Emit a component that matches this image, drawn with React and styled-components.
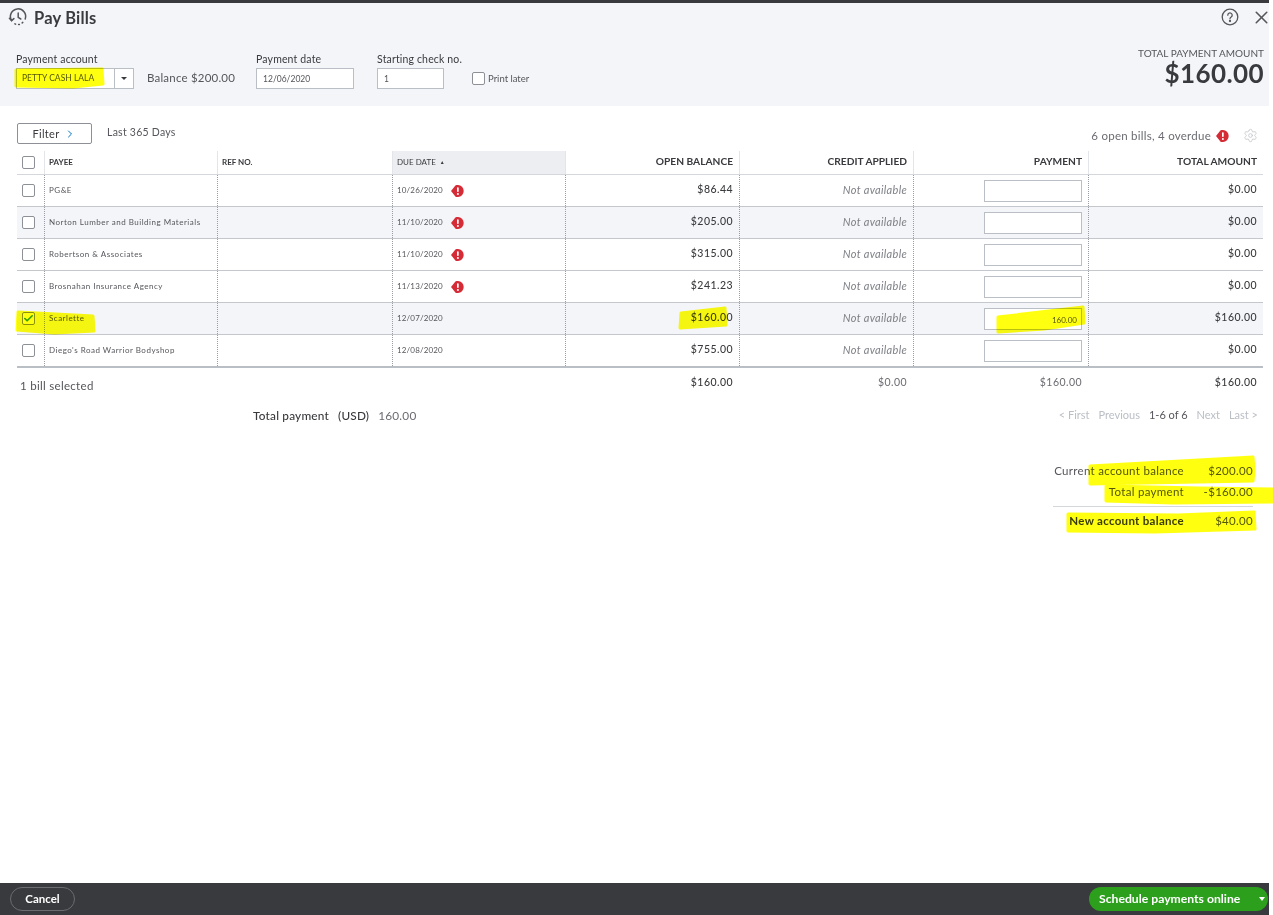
import React from "react";
import styled, { createGlobalStyle } from "styled-components";
import { Settings, X, ChevronRight, Check } from "lucide-react";

const bills = [
  { payee: "PG&E", due: "10/26/2020", late: true, open: "$86.44", total: "$0.00" },
  { payee: "Norton Lumber and Building Materials", due: "11/10/2020", late: true, open: "$205.00", total: "$0.00", shade: true },
  { payee: "Robertson & Associates", due: "11/10/2020", late: true, open: "$315.00", total: "$0.00" },
  { payee: "Brosnahan Insurance Agency", due: "11/13/2020", late: true, open: "$241.23", total: "$0.00" },
  { payee: "Scarlette", due: "12/07/2020", open: "$160.00", total: "$160.00", paid: "160.00", shade: true },
  { payee: "Diego's Road Warrior Bodyshop", due: "12/08/2020", open: "$755.00", total: "$0.00" },
];

const ErrorBadge = () => (
  <svg width="13" height="12" viewBox="0 0 13 12">
    <path d="M0 6L4.4.6C4.7.2 5.1 0 5.6 0H7a5.7 6 0 0 1 0 12H5.6c-.5 0-.9-.2-1.2-.6z" fill="#d52b36" />
    <rect x="6" y="2.2" width="1.7" height="4.8" rx=".8" fill="#fff" />
    <circle cx="6.85" cy="9" r="1" fill="#fff" />
  </svg>
);

const ClockRefresh = () => (
  <svg width="20" height="20" viewBox="0 0 20 20" fill="none" stroke="#55565b" strokeWidth="1.5" strokeLinecap="round">
    <path d="M3.6 13.5A7.6 7.6 0 1 1 17.2 12" />
    <path d="M1.4 11.2l2.2 2.4 2.3-2" />
    <path d="M10.2 6v4.4l2.6 1.6" />
    <path d="M14.8 15.4l-.6.5M11.4 17.4h-.8M7.6 17.2l-.7-.4" />
  </svg>
);

const HelpIcon = () => (
  <svg width="18" height="18" viewBox="0 0 18 18" fill="none" stroke="#55565b" strokeWidth="1.3">
    <circle cx="9" cy="9" r="7.8" />
    <path d="M6.8 7.2a2.2 2.2 0 1 1 3.4 1.8c-.8.5-1.2 1-1.2 1.8" strokeLinecap="round" />
    <circle cx="9" cy="13" r=".5" fill="#55565b" />
  </svg>
);

// marker strokes someone drew over the screenshot
const Markers = () => (
  <MarkerLayer width="1273" height="915" viewBox="0 0 1273 915">
    <path d="M16 70l86-1 1 15-30 3-57-1z" />
    <path d="M18 312l75 4 1 15-40 2-37-3z" />
    <path d="M681 313l44-5 1 17-46 3z" />
    <path d="M998 317l85-10 1 16-40 6-46 3z" />
    <path d="M1090 466l163-9 1 13-1 11-163 3z" />
    <path d="M1106 486l93 2 74 1v13l-100 1-67-2z" />
    <path d="M1068 514l110 1 76-3 1 17-100 3-87-1z" />
  </MarkerLayer>
);

export default function App() {
  return (
    <>
      <GlobalStyle />
      <Page>
        <Header>
          <TitleRow>
            <ClockRefresh />
            <Title>Pay Bills</Title>
            <HeaderIcons>
              <HelpIcon />
              <X size={21} color="#55565b" strokeWidth={1.8} />
            </HeaderIcons>
          </TitleRow>
          <FormRow>
            <Field>
              <FieldLabel>Payment account</FieldLabel>
              <Combo>
                <ComboText>PETTY CASH LALA</ComboText>
                <ComboCaret />
              </Combo>
            </Field>
            <BalanceText>Balance $200.00</BalanceText>
            <Field>
              <FieldLabel>Payment date</FieldLabel>
              <TextBox $width={98}>12/06/2020</TextBox>
            </Field>
            <Field>
              <FieldLabel>Starting check no.</FieldLabel>
              <TextBox $width={67}>1</TextBox>
            </Field>
            <PrintLater>
              <PrintBox />
              Print later
            </PrintLater>
            <TotalBlock>
              <TotalLabel>TOTAL PAYMENT AMOUNT</TotalLabel>
              <TotalAmount>$160.00</TotalAmount>
            </TotalBlock>
          </FormRow>
        </Header>

        <Content>
          <FilterRow>
            <FilterButton>
              Filter <ChevronRight size={12} color="#0077c5" />
            </FilterButton>
            <FilterText>Last 365 Days</FilterText>
            <OpenBills>
              6 open bills, 4 overdue <ErrorBadge />
              <GearWrap>
                <Settings size={15} color="#c4c5c9" strokeWidth={1.3} />
              </GearWrap>
            </OpenBills>
          </FilterRow>

          <Table>
            <HeadRow>
              <HeadCell $box><CheckBox /></HeadCell>
              <HeadCell $small>PAYEE</HeadCell>
              <HeadCell $small>REF NO.</HeadCell>
              <HeadCell $small $sorted>DUE DATE <SortArrow>▲</SortArrow></HeadCell>
              <HeadCell $right>OPEN BALANCE</HeadCell>
              <HeadCell $right>CREDIT APPLIED</HeadCell>
              <HeadCell $right>PAYMENT</HeadCell>
              <HeadCell $right>TOTAL AMOUNT</HeadCell>
            </HeadRow>
            {bills.map((bill) => (
              <BodyRow key={bill.payee} $shade={bill.shade}>
                <BoxCell>
                  <CheckBox>
                    {bill.paid && <Check size={11} color="#2ca01c" strokeWidth={3.5} />}
                  </CheckBox>
                </BoxCell>
                <Cell $small>{bill.payee}</Cell>
                <Cell />
                <Cell $small $date>
                  {bill.due}
                  {bill.late && <BadgeGap><ErrorBadge /></BadgeGap>}
                </Cell>
                <Cell $right $strong>{bill.open}</Cell>
                <Cell $right $muted>Not available</Cell>
                <InputCell>
                  <PayInput>{bill.paid}</PayInput>
                </InputCell>
                <Cell $right $strong>{bill.total}</Cell>
              </BodyRow>
            ))}
            <FootRow>
              <SelectedText>1 bill selected</SelectedText>
              <FootCell $strong>$160.00</FootCell>
              <FootCell>$0.00</FootCell>
              <FootCell>$160.00</FootCell>
              <FootCell $strong>$160.00</FootCell>
            </FootRow>
          </Table>

          <SummaryRow>
            <TotalPayment>
              <b>Total payment</b>
              <b>(USD)</b>
              <span>160.00</span>
            </TotalPayment>
            <Pager>
              <span>&lt; First</span>
              <span>Previous</span>
              <PagerCurrent>1-6 of 6</PagerCurrent>
              <span>Next</span>
              <span>Last &gt;</span>
            </Pager>
          </SummaryRow>

          <Balances>
            <BalanceRow>
              <span>Current account balance</span>
              <BalanceValue>$200.00</BalanceValue>
            </BalanceRow>
            <BalanceRow>
              <span>Total payment</span>
              <BalanceValue>-$160.00</BalanceValue>
            </BalanceRow>
            <BalanceRow $total>
              <strong>New account balance</strong>
              <BalanceValue>$40.00</BalanceValue>
            </BalanceRow>
          </Balances>
        </Content>

        <Footer>
          <CancelButton>Cancel</CancelButton>
          <ScheduleButton>
            Schedule payments online
            <ScheduleCaret />
          </ScheduleButton>
        </Footer>
        <Markers />
      </Page>
    </>
  );
}

const GlobalStyle = createGlobalStyle`
  html, body {
    margin: 0;
    background: #fff;
  }
  body {
    font-family: "Lato", "Liberation Sans", sans-serif;
    color: #393a3d;
  }
`;

const Page = styled.div`
  position: relative;
  width: 1269px;
  height: 915px;
  display: flex;
  flex-direction: column;
  border-top: 3px solid #393a3d;
  box-sizing: border-box;
`;

const MarkerLayer = styled.svg`
  position: absolute;
  left: 0;
  top: -3px;
  pointer-events: none;
  mix-blend-mode: multiply;
  path {
    fill: #ffff10;
    stroke: #ffff10;
    stroke-width: 3;
    stroke-linejoin: round;
  }
`;

const Header = styled.div`
  height: 103px;
  background: #f4f5f8;
  padding: 4px 5px 0 8px;
  box-sizing: border-box;
`;

const TitleRow = styled.div`
  display: flex;
  align-items: center;
  height: 20px;
`;

const Title = styled.h1`
  margin: 2px 0 0 6px;
  font-size: 16.5px;
  font-weight: 700;
  letter-spacing: 0.2px;
`;

const HeaderIcons = styled.div`
  margin-left: auto;
  display: flex;
  align-items: center;
  gap: 12px;
  margin-right: -8px;
`;

const FormRow = styled.div`
  display: flex;
  align-items: flex-end;
  margin: 26px 0 0 8px;
  position: relative;
`;

const Field = styled.div`
  display: flex;
  flex-direction: column;
  gap: 3px;
  margin-right: 23px;
`;

const FieldLabel = styled.label`
  font-size: 10.5px;
  letter-spacing: 0.15px;
  color: #393a3d;
`;

const Combo = styled.div`
  width: 118px;
  height: 21px;
  display: flex;
  background: #fff;
  border: 1px solid #babec5;
  box-sizing: border-box;
`;

const ComboText = styled.div`
  flex: 1;
  padding-left: 5px;
  font-size: 8.5px;
  line-height: 19px;
  color: #55565b;
`;

const ComboCaret = styled.div`
  width: 18px;
  border-left: 1px solid #babec5;
  position: relative;
  &::after {
    content: "";
    position: absolute;
    left: 6px;
    top: 8px;
    border: 3px solid transparent;
    border-top: 3px solid #393a3d;
  }
`;

const BalanceText = styled.div`
  margin: 0 21px 3px -10px;
  font-size: 11.5px;
  line-height: 16px;
  letter-spacing: 0.2px;
  color: #55565b;
`;

const TextBox = styled.div`
  width: ${(p) => p.$width}px;
  height: 21px;
  padding-left: 6px;
  background: #fff;
  border: 1px solid #babec5;
  box-sizing: border-box;
  font-size: 8.5px;
  line-height: 20px;
  color: #55565b;
`;

const PrintLater = styled.div`
  display: flex;
  align-items: center;
  gap: 3px;
  margin: 0 0 4px -13px;
  font-size: 9.5px;
  color: #55565b;
`;

const PrintBox = styled.span`
  width: 13px;
  height: 13px;
  background: #fff;
  border: 1px solid #8d9096;
  border-radius: 2px;
  box-sizing: border-box;
`;

const TotalBlock = styled.div`
  position: absolute;
  right: 0;
  top: -6px;
  text-align: right;
`;

const TotalLabel = styled.div`
  font-size: 10px;
  color: #55565b;
`;

const TotalAmount = styled.div`
  font-size: 26px;
  font-weight: 700;
  line-height: 28px;
  letter-spacing: 0.4px;
`;

const Content = styled.div`
  flex: 1;
  padding: 0 6px 0 17px;
`;

const FilterRow = styled.div`
  height: 45px;
  display: flex;
  align-items: flex-start;
  padding-top: 17px;
  box-sizing: border-box;
`;

const FilterButton = styled.div`
  width: 75px;
  height: 21px;
  display: flex;
  align-items: center;
  justify-content: center;
  gap: 5px;
  border: 1px solid #8d9096;
  border-radius: 2px;
  box-sizing: border-box;
  font-size: 11px;
  letter-spacing: 0.3px;
`;

const FilterText = styled.div`
  margin-left: 15px;
  font-size: 10.5px;
  line-height: 18px;
  letter-spacing: 0.25px;
  color: #55565b;
`;

const OpenBills = styled.div`
  margin-left: auto;
  margin-top: 5px;
  display: flex;
  align-items: center;
  gap: 5px;
  padding-right: 5px;
  font-size: 11.5px;
  letter-spacing: 0.25px;
  color: #6b6c72;
`;

const GearWrap = styled.span`
  display: flex;
  margin-left: 9px;
`;

const columns = "27px 173px 175px 173px 174px 174px 175px 175px";

const Table = styled.div`
  display: flex;
  flex-direction: column;
`;

const HeadRow = styled.div`
  display: grid;
  grid-template-columns: ${columns};
  height: 24px;
  border-bottom: 1px solid #d4d7dc;
  box-sizing: border-box;
`;

const HeadCell = styled.div`
  display: flex;
  align-items: center;
  justify-content: ${(p) => (p.$right ? "flex-end" : "flex-start")};
  padding: 0 6px ${(p) => (p.$box ? "0" : p.$right ? "3px" : "2px")} ${(p) => (p.$box ? "5px" : "4px")};
  font-size: ${(p) => (p.$small ? "8px" : "10.2px")};
  font-weight: 700;
  color: #393a3d;
  background: ${(p) => (p.$sorted ? "#eceef1" : "transparent")};
  ${(p) => p.$sorted && "font-weight: 400;"}
  &:not(:first-child) {
    border-left: 1px solid #e3e5e8;
  }
`;

const SortArrow = styled.span`
  margin-left: 4px;
  font-size: 5px;
`;

const BodyRow = styled.div`
  display: grid;
  grid-template-columns: ${columns};
  height: 32px;
  background: ${(p) => (p.$shade ? "#f4f5f8" : "#fff")};
  border-bottom: 1px solid #c4c7cc;
  box-sizing: border-box;
  &:nth-child(7) {
    height: 33px;
    border-bottom: 2px solid #babec5;
  }
`;

const Cell = styled.div`
  display: flex;
  align-items: center;
  justify-content: ${(p) => (p.$right ? "flex-end" : "flex-start")};
  padding: 0 6px ${(p) => (p.$right ? "3px" : "2px")} ${(p) => (p.$small ? "4px" : "5px")};
  font-size: ${(p) => (p.$small ? "8px" : p.$muted ? "11px" : "10.5px")};
  font-style: ${(p) => (p.$muted ? "italic" : "normal")};
  font-weight: ${(p) => (p.$strong ? 500 : 400)};
  color: ${(p) => (p.$muted ? "#7e8086" : p.$small ? "#55565b" : "#393a3d")};
  letter-spacing: ${(p) => (p.$date ? "0.15px" : p.$small ? "0.5px" : p.$muted ? "0.3px" : "0.45px")};
  border-left: 1px dotted #9a9da3;
`;

const BoxCell = styled.div`
  display: flex;
  align-items: center;
  padding-left: 5px;
`;

const InputCell = styled.div`
  display: flex;
  align-items: center;
  justify-content: flex-end;
  padding-right: 6px;
  border-left: 1px dotted #9a9da3;
`;

const CheckBox = styled.div`
  width: 13px;
  height: 13px;
  display: flex;
  align-items: center;
  justify-content: center;
  background: #fff;
  border: 1px solid #8d9096;
  border-radius: 2px;
  box-sizing: border-box;
`;

const BadgeGap = styled.span`
  display: flex;
  margin-left: 8px;
  margin-top: 2px;
`;

const PayInput = styled.div`
  width: 98px;
  height: 22px;
  padding-right: 4px;
  background: #fff;
  border: 1px solid #babec5;
  box-sizing: border-box;
  font-size: 8px;
  line-height: 22px;
  text-align: right;
  color: #55565b;
`;

const FootRow = styled.div`
  display: grid;
  grid-template-columns: 548px 174px 174px 175px 175px;
  height: 31px;
  align-items: center;
`;

const SelectedText = styled.div`
  padding-left: 3px;
  font-size: 11.5px;
  letter-spacing: 0.3px;
  color: #55565b;
  padding-top: 3px;
`;

const FootCell = styled.div`
  padding: 0 6px 4px 0;
  text-align: right;
  font-size: 10.5px;
  letter-spacing: 0.45px;
  font-weight: ${(p) => (p.$strong ? 500 : 400)};
  color: ${(p) => (p.$strong ? "#393a3d" : "#6b6c72")};
`;

const SummaryRow = styled.div`
  display: flex;
  align-items: center;
  justify-content: space-between;
  height: 33px;
  padding: 0 5px 0 236px;
`;

const TotalPayment = styled.div`
  display: flex;
  gap: 9px;
  font-size: 11.8px;
  letter-spacing: 0.2px;
  color: #6b6c72;
  b {
    font-weight: 500;
    color: #393a3d;
  }
`;

const Pager = styled.div`
  display: flex;
  gap: 9px;
  margin-top: -3px;
  font-size: 11px;
  color: #babec5;
`;

const PagerCurrent = styled.span`
  color: #55565b;
`;

const Balances = styled.div`
  width: 200px;
  margin: 28px 0 0 auto;
  padding-right: 10px;
  box-sizing: content-box;
`;

const BalanceRow = styled.div`
  display: flex;
  justify-content: flex-end;
  align-items: center;
  height: ${(p) => (p.$total ? "27px" : "21px")};
  font-size: 11.5px;
  letter-spacing: 0.3px;
  color: #55565b;
  ${(p) => p.$total && "border-top: 1px solid #d4d7dc; margin-top: 4px; box-sizing: border-box;"}
  strong {
    font-weight: 700;
    color: #393a3d;
  }
`;

const BalanceValue = styled.span`
  width: 69px;
  text-align: right;
`;

const Footer = styled.div`
  height: 32px;
  display: flex;
  align-items: center;
  justify-content: space-between;
  padding: 0 1px 0 10px;
  background: #393a3d;
`;

const CancelButton = styled.div`
  width: 65px;
  height: 24px;
  border: 1px solid #6b6c72;
  border-radius: 12px;
  box-sizing: border-box;
  text-align: center;
  line-height: 22px;
  font-size: 11.5px;
  font-weight: 700;
  color: #fff;
`;

const ScheduleButton = styled.div`
  width: 179px;
  height: 24px;
  padding-left: 10px;
  position: relative;
  border-radius: 12px;
  box-sizing: border-box;
  background: #2ca01c;
  line-height: 24px;
  font-size: 12.2px;
  font-weight: 700;
  color: #fff;
`;

const ScheduleCaret = styled.span`
  position: absolute;
  right: 3px;
  top: 10px;
  border: 3.5px solid transparent;
  border-top: 4px solid #fff;
`;
